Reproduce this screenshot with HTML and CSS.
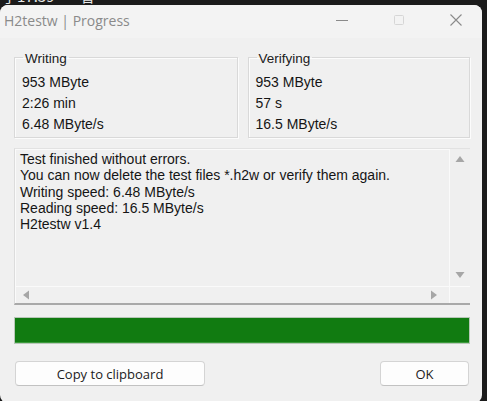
FILE: index.html
```html
<!DOCTYPE html>
<html>
<head>
<meta charset="utf-8">
<link rel="stylesheet" href="styles.css">
</head>
<body>
<div class="desk"><span class="desk-text">手17:39 &nbsp; 一看</span></div>
<div class="window">
  <div class="titlebar">
    <span class="title">H2testw | Progress</span>
    <div class="controls">
      <span class="ctl"><svg width="14" height="14" viewBox="0 0 14 14"><path d="M1 7.5H13" stroke="#8a8a8a" stroke-width="1"/></svg></span>
      <span class="ctl"><svg width="14" height="14" viewBox="0 0 14 14"><rect x="2.5" y="2.5" width="9" height="9" rx="1" fill="none" stroke="#d6d6d6" stroke-width="1"/></svg></span>
      <span class="ctl"><svg width="14" height="14" viewBox="0 0 14 14"><path d="M1.5 1.5L12.5 12.5M12.5 1.5L1.5 12.5" stroke="#8a8a8a" stroke-width="1.1"/></svg></span>
    </div>
  </div>
  <div class="content">
    <div class="groups">
      <fieldset class="group">
        <legend>Writing</legend>
        <div class="val">953 MByte</div>
        <div class="val">2:26 min</div>
        <div class="val">6.48 MByte/s</div>
      </fieldset>
      <fieldset class="group">
        <legend>Verifying</legend>
        <div class="val">953 MByte</div>
        <div class="val">57 s</div>
        <div class="val">16.5 MByte/s</div>
      </fieldset>
    </div>
    <div class="log">
      <div class="log-main">
        <div class="log-text">
          <div>Test finished without errors.</div>
          <div>You can now delete the test files *.h2w or verify them again.</div>
          <div>Writing speed: 6.48 MByte/s</div>
          <div>Reading speed: 16.5 MByte/s</div>
          <div>H2testw v1.4</div>
        </div>
        <div class="vscroll">
          <svg width="10" height="8" viewBox="0 0 10 8"><path d="M5 1L9.5 7H0.5Z" fill="#a6a6a6"/></svg>
          <svg width="10" height="8" viewBox="0 0 10 8"><path d="M5 7L9.5 1H0.5Z" fill="#a6a6a6"/></svg>
        </div>
      </div>
      <div class="hscroll-row">
        <div class="hscroll">
          <svg width="8" height="10" viewBox="0 0 8 10"><path d="M1 5L7 0.5V9.5Z" fill="#a6a6a6"/></svg>
          <svg width="8" height="10" viewBox="0 0 8 10"><path d="M7 5L1 0.5V9.5Z" fill="#a6a6a6"/></svg>
        </div>
        <div class="corner"></div>
      </div>
    </div>
    <div class="progress"><div class="progress-fill" style="width:100%"></div></div>
    <div class="buttons">
      <button class="btn btn-copy">Copy to clipboard</button>
      <button class="btn btn-ok">OK</button>
    </div>
  </div>
</div>
</body>
</html>
```

FILE: styles.css
```css
* { box-sizing: border-box; }
html, body {
  margin: 0;
  padding: 0;
  background: #1b1b1b;
  width: 487px;
  height: 401px;
  overflow: hidden;
}
.desk {
  height: 5px;
  overflow: hidden;
  padding-left: 2px;
}
.desk-text {
  display: block;
  margin-top: -12px;
  font: 15px "Noto Sans CJK SC", "Liberation Sans", sans-serif;
  line-height: 16px;
  color: #e8e8e8;
  white-space: nowrap;
}
.window {
  width: 482px;
  height: 398px;
  background: #f0f0f0;
  border-radius: 8px;
  display: flex;
  flex-direction: column;
  overflow: hidden;
}
.titlebar {
  height: 33px;
  display: flex;
  align-items: center;
  justify-content: space-between;
  background: #f3f3f3;
}
.title {
  font: 14px "Open Sans", "Noto Sans", sans-serif;
  color: #8a8a8a;
  padding-left: 4px;
  margin-top: -3px;
}
.controls {
  display: flex;
  margin-top: -4px;
  margin-right: -2px;
}
.ctl {
  width: 57px;
  height: 20px;
  display: flex;
  align-items: center;
  justify-content: center;
}
.content {
  flex: 1;
  display: flex;
  flex-direction: column;
  padding: 0 12px 0 14px;
  font: 14px "Liberation Sans", Arial, sans-serif;
  color: #151515;
}
.groups {
  display: flex;
  gap: 10px;
  margin-top: 11px;
}
.group {
  margin: 0;
  border: 1px solid #d9d9d9;
  box-shadow: inset 1px 1px 0 #fcfcfc, 1px 1px 0 #fcfcfc;
  padding: 6px 7px 0 7px;
  height: 89px;
}
.group:first-child { width: 224px; }
.group:last-child { width: 223px; }
.group legend {
  padding: 2px 2px 0 2px;
  margin-left: 1px;
  line-height: 15px;
  font-size: 13.5px;
  color: #202020;
}
.val {
  line-height: 21px;
}
.log {
  margin-top: 10px;
  width: 456px;
  height: 157px;
  border-top: 1px solid #e2e2e2;
  border-left: 1px solid #dcdcdc;
  border-bottom: 2px solid #a9a9a9;
  box-shadow: inset 1px 1px 0 #fafafa;
  display: flex;
  flex-direction: column;
}
.log-main {
  flex: 1;
  display: flex;
}
.log-text {
  flex: 1;
  padding: 2px 0 0 5px;
  line-height: 16.3px;
  white-space: nowrap;
  overflow: hidden;
}
.vscroll {
  width: 21px;
  display: flex;
  flex-direction: column;
  align-items: center;
  justify-content: space-between;
  padding: 6px 0 7px 0;
  border-left: 1px solid #fafafa;
  background: #efefef;
}
.hscroll-row {
  height: 17px;
  display: flex;
  border-top: 1px solid #fafafa;
}
.hscroll {
  flex: 1;
  display: flex;
  align-items: center;
  justify-content: space-between;
  padding: 0 11px 0 7px;
}
.corner {
  width: 21px;
  border-left: 1px solid #fafafa;
}
.progress {
  margin-top: 12px;
  width: 456px;
  height: 27px;
  border: 1px solid #b8c7b8;
  background: #e6e6e6;
}
.progress-fill {
  height: 100%;
  background: #117b11;
  border-bottom: 1px solid #3c9a3c;
}
.buttons {
  margin-top: 17px;
  display: flex;
  justify-content: space-between;
  width: 455px;
  padding-left: 1px;
}
.btn {
  height: 25px;
  background: #fdfdfd;
  border: 1px solid #d4d4d4;
  border-bottom-color: #c2c2c2;
  border-radius: 4px;
  font: 13px "Open Sans", "Noto Sans", sans-serif;
  color: #1b1b1b;
  padding: 0;
  line-height: 22px;
}
.btn-copy { width: 190px; }
.btn-ok { width: 89px; }
```
